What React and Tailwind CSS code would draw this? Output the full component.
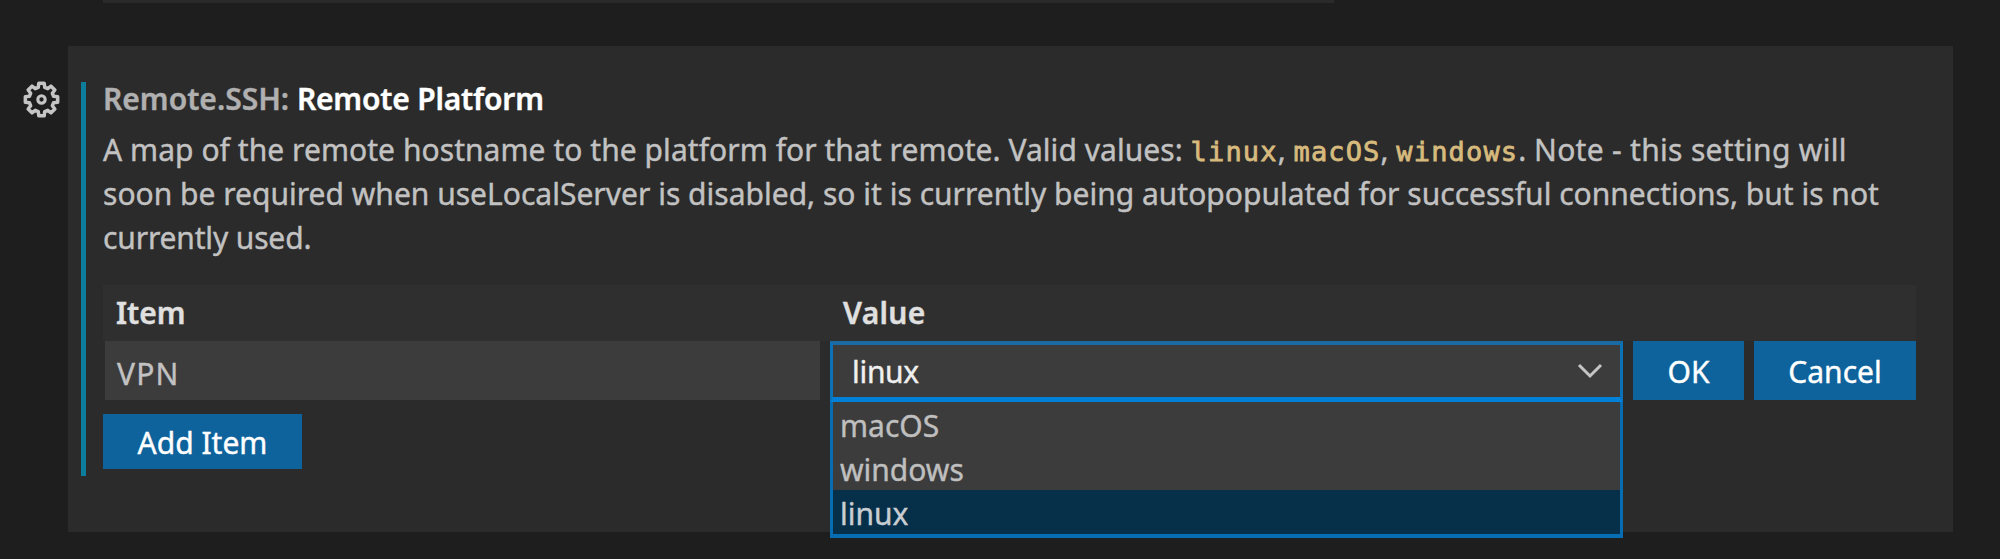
import React from "react";

const OPTIONS = ["macOS", "windows", "linux"];

// Outline of an eight-toothed gear centred on the origin.
const GEAR_POINTS = Array.from({ length: 8 }, (_, i) =>
  [
    [-15, 12.2],
    [-9.5, 16],
    [9.5, 16],
    [15, 12.2],
  ].map(([offset, r]) => {
    const a = ((i * 45 + offset) * Math.PI) / 180;
    return `${(r * Math.sin(a)).toFixed(2)},${(-r * Math.cos(a)).toFixed(2)}`;
  })
)
  .flat()
  .join(" ");

function Gear() {
  return (
    <svg className="h-[41px] w-[41px]" viewBox="-20 -20 40 40" fill="none" stroke="#c5c5c5" strokeLinejoin="round">
      <polygon points={GEAR_POINTS} strokeWidth="3.4" />
      <circle r="3.6" strokeWidth="3" />
    </svg>
  );
}

function Button({ className, children }) {
  return (
    <button className={`flex items-center justify-center bg-[#0e639c] pt-[2px] text-white ${className}`}>
      {children}
    </button>
  );
}

function Code({ children }) {
  return (
    <code className="font-['DejaVu_Sans_Mono',monospace] text-[27px] tracking-[1.15px] text-[#d7ba7d] [-webkit-text-stroke:0.8px]">
      {children}
    </code>
  );
}

function PlatformSelect() {
  return (
    <div className="relative h-[61px] w-[793px]">
      <div className="flex h-[61px] items-center justify-between border-x-[3px] border-t-[4px] border-b-[5px] border-x-[#0b72b8] border-t-[#1a6ba3] border-b-[#0080d6] bg-[#3c3c3c] pr-[17px] pl-[19px] text-[#f0f0f0]">
        <span className="tracking-[-0.3px]">linux</span>
        <svg className="h-[16px] w-[26px]" viewBox="0 0 26 16" fill="none" stroke="#c5c5c5" strokeWidth="3">
          <path d="M2 2 L13 13 L24 2" />
        </svg>
      </div>
      <ul className="absolute top-[61px] left-0 w-full border-x-[3px] border-b-[4px] border-[#066db3] bg-[#3c3c3c] text-[#bfbfbf]">
        {OPTIONS.map((name) => (
          <li
            key={name}
            className={`h-[44px] pl-[7px] leading-[47px] ${name === "linux" ? "bg-[#062f4a] text-[#c8ced2]" : ""}`}
          >
            {name}
          </li>
        ))}
      </ul>
    </div>
  );
}

export default function App() {
  return (
    <div className="flex h-[559px] w-[2000px] flex-col overflow-hidden bg-[#1e1e1e] font-['Noto_Sans','Open_Sans',sans-serif] text-[30px] whitespace-nowrap text-[#c2c2c2] [-webkit-text-stroke:0.4px]">
      <div className="ml-[103px] h-[3px] w-[1231px] shrink-0 bg-[#2a2a2a]" />
      <div className="mt-[43px] flex h-[486px] shrink-0">
        <div className="w-[68px] pt-[33px] pl-[21px]">
          <Gear />
        </div>
        <section className="flex w-[1885px] bg-[#2b2b2b] pt-[36px] pl-[13px]">
          <div className="h-[394px] w-[5px] shrink-0 bg-[#0c7d9d]" />
          <div className="ml-[17px] w-[1813px]">
            <h2 className="-mt-[6px] h-[52px] leading-[45px] font-semibold text-[#b0b0b0]">
              <span>Remote.SSH: </span>
              <span className="tracking-[-0.2px] text-white">Remote Platform</span>
            </h2>
            <div className="leading-[44px]">
              <p className="h-[44px]">
                <span className="tracking-[0.05px]">A map of the remote hostname to the platform for that remote. Valid values: </span>
                <Code>linux</Code>, <Code>macOS</Code>, <Code>windows</Code>. <span className="tracking-[0.3px]">Note - this setting will</span>
              </p>
              <p className="h-[44px] tracking-[0.01px]">
                soon be required when useLocalServer is disabled, so it is currently being autopopulated for successful connections, but is not
              </p>
              <p className="h-[44px] tracking-[-0.15px]">currently used.</p>
            </div>
            <div className="mt-[25px] grid h-[56px] grid-cols-[727px_1fr] bg-[#2f2f2f] pl-[13px] leading-[55px] font-semibold text-[#e0e0e0]">
              <span>Item</span>
              <span className="tracking-[0.3px]">Value</span>
            </div>
            <div className="flex h-[59px] items-start pl-[2px]">
              <div className="mr-[10px] flex h-[59px] w-[715px] items-center bg-[#3c3c3c] pt-[5px] pl-[12px] tracking-[1.2px]">VPN</div>
              <PlatformSelect />
              <Button className="ml-[10px] h-[59px] w-[111px]">OK</Button>
              <Button className="ml-[10px] h-[59px] w-[162px]">Cancel</Button>
            </div>
            <Button className="mt-[14px] h-[55px] w-[199px]">Add Item</Button>
          </div>
        </section>
      </div>
    </div>
  );
}
